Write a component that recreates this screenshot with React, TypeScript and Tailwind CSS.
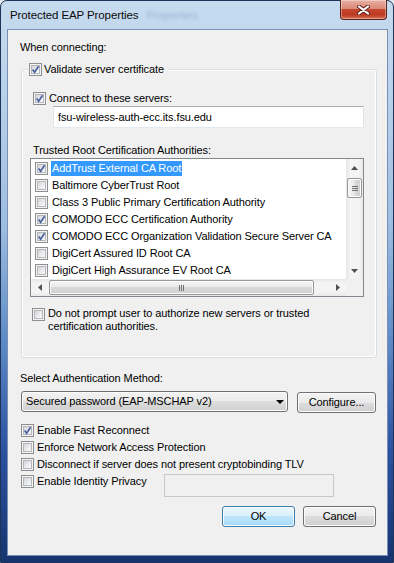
import React from "react";

const Check = ({ on }: { on?: boolean }) => (
  <span className="relative flex h-[13px] w-[13px] shrink-0 items-center justify-center border border-[#8e8f8f] bg-[#f4f4f4]">
    <span className="h-[9px] w-[9px] border border-[#b4b6ba] bg-[linear-gradient(135deg,#d3d5d9_0%,#e9ebee_55%,#fbfbfb_100%)]" />
    {on && (
      <svg viewBox="0 0 11 11" className="absolute left-0 top-0 h-[11px] w-[11px]">
        <path d="M2.6 5.6 L4.6 8.3 L8.6 2.2" fill="none" stroke="#4c62a0" strokeWidth="1.7" />
      </svg>
    )}
  </span>
);

const Tri = ({ dir }: { dir: "up" | "down" | "left" | "right" }) => {
  const d = {
    up: "M0 4 L3.5 0 L7 4 Z",
    down: "M0 0 L7 0 L3.5 4 Z",
    left: "M4 0 L4 7 L0 3.5 Z",
    right: "M0 0 L4 3.5 L0 7 Z",
  }[dir];
  const vert = dir === "up" || dir === "down";
  return (
    <svg viewBox={vert ? "0 0 7 4" : "0 0 4 7"} className={vert ? "h-[4px] w-[7px]" : "h-[7px] w-[4px]"}>
      <path d={d} fill="#505050" />
    </svg>
  );
};

const Btn = ({ children, def, className = "" }: { children: React.ReactNode; def?: boolean; className?: string }) => (
  <button
    className={`flex h-[21px] items-center justify-center rounded-[3px] border text-[11px] text-black shadow-[inset_0_0_0_1px_#fcfcfc] ${
      def
        ? "border-[#3c7fb1] bg-[linear-gradient(180deg,#eaf6fd_0%,#d9f0fc_50%,#bee6fd_50%,#a7d9f5_100%)]"
        : "border-[#707070] bg-[linear-gradient(180deg,#f2f2f2_0%,#ebebeb_50%,#dddddd_50%,#cfcfcf_100%)]"
    } ${className}`}
  >
    {children}
  </button>
);

const certs = [
  { name: "AddTrust External CA Root", on: true, sel: true },
  { name: "Baltimore CyberTrust Root" },
  { name: "Class 3 Public Primary Certification Authority" },
  { name: "COMODO ECC Certification Authority", on: true },
  { name: "COMODO ECC Organization Validation Secure Server CA", on: true },
  { name: "DigiCert Assured ID Root CA" },
  { name: "DigiCert High Assurance EV Root CA" },
];

const options = [
  { label: "Enable Fast Reconnect", on: true },
  { label: "Enforce Network Access Protection" },
  { label: "Disconnect if server does not present cryptobinding TLV" },
];

export default function App() {
  return (
    <div className="h-[563px] w-[394px] overflow-hidden bg-[#dfe8f1] font-['Liberation_Sans',Arial,sans-serif] text-[11px] tracking-[-0.1px] text-black">
      <div className="flex h-full w-full flex-col rounded-t-[7px] border border-[#1f3358] bg-[linear-gradient(180deg,#c6dbef_0%,#b7d0e9_18%,#9dbde0_40%,#5f8cc7_60%,#2c52a0_80%,#16346f_100%)]">
        {/* title bar */}
        <div className="flex h-[29px] shrink-0 items-start justify-between pl-[9px] pr-[6px]">
          <div className="mt-[7px] flex items-center leading-[15px]">
            <span className="text-[11.5px] text-[#0b0b0b]">Protected EAP Properties</span>
            <span className="ml-[8px] text-[11.5px] text-[#4d79a8] opacity-35 blur-[1.4px]">Properties</span>
          </div>
          <div className="-mt-[1px] flex h-[20px] w-[47px] items-center justify-center rounded-b-[4px] border border-t-0 border-[#5a2219] bg-[linear-gradient(180deg,#eab0a2_0%,#d98a79_45%,#c5472f_50%,#bd3a22_78%,#d8745a_100%)] shadow-[inset_0_0_0_1px_rgba(255,255,255,0.35)]">
            <svg viewBox="0 0 13 10" className="h-[10px] w-[13px]">
              <path d="M2 1.5 L11 8.5 M11 1.5 L2 8.5" stroke="#5b2018" strokeWidth="4" strokeLinecap="round" />
              <path d="M2 1.5 L11 8.5 M11 1.5 L2 8.5" stroke="#ffffff" strokeWidth="2.2" strokeLinecap="round" />
            </svg>
          </div>
        </div>

        {/* client area */}
        <div className="ml-[7px] flex h-[525px] w-[379px] flex-col bg-[#f0f0f0] pl-[12px] pt-[10px] shadow-[0_0_0_1px_#7890b4]">
          <div className="h-[15px] leading-[15px]">When connecting:</div>

          <fieldset className="ml-[1px] mt-[6px] w-[356px] rounded-[3px] border border-[#d5dfe5] pb-[24px] pl-[5px] shadow-[inset_0_0_0_1px_#ffffff]">
            <legend className="flex h-[16px] items-center gap-[2px] bg-[#f0f0f0] px-[2px]">
              <Check on />
              <span className="pr-[2px]">Validate server certificate</span>
            </legend>

            <div className="ml-[6px] mt-[13px] flex h-[16px] items-center gap-[3px]">
              <Check on />
              <span>Connect to these servers:</span>
            </div>
            <div className="ml-[26px] flex h-[22px] w-[311px] items-center border border-[#e2e3ea] border-t-[#abadb3] border-b-[#e3e9ef] bg-white pl-[4px]">
              fsu-wireless-auth-ecc.its.fsu.edu
            </div>

            <div className="ml-[6px] mt-[14px] h-[16px] leading-[16px]">Trusted Root Certification Authorities:</div>

            <div className="ml-[3px] flex h-[139px] w-[334px] flex-col border border-[#828790] bg-white">
              <div className="flex h-[120px]">
                <div className="flex-1 overflow-hidden pt-[1px]">
                  {certs.map((c) => (
                    <div key={c.name} className="flex h-[17px] items-center whitespace-nowrap pl-[4px]">
                      <Check on={c.on} />
                      <span
                        className={`ml-[3px] flex h-[15px] items-center px-[1px] ${
                          c.sel ? "bg-[#3399ff] text-white" : ""
                        }`}
                      >
                        {c.name}
                      </span>
                    </div>
                  ))}
                </div>
                {/* vertical scrollbar */}
                <div className="flex w-[17px] flex-col bg-[linear-gradient(90deg,#e6e6e6_0%,#f4f4f4_25%,#f4f4f4_75%,#e9e9e9_100%)]">
                  <div className="flex h-[17px] items-center justify-center">
                    <Tri dir="up" />
                  </div>
                  <div className="ml-[1px] mt-[2px] flex h-[20px] w-[15px] flex-col items-center justify-center gap-[1px] rounded-[2px] border border-[#979797] bg-[linear-gradient(90deg,#f6f6f6_0%,#e8e8e8_50%,#d9d9d9_50%,#d0d0d0_100%)] shadow-[inset_0_0_0_1px_#fbfbfb]">
                    <span className="h-[1px] w-[6px] bg-[#6f6f6f]" />
                    <span className="h-[1px] w-[6px] bg-[#6f6f6f]" />
                    <span className="h-[1px] w-[6px] bg-[#6f6f6f]" />
                  </div>
                  <div className="flex-1" />
                  <div className="flex h-[17px] items-center justify-center">
                    <Tri dir="down" />
                  </div>
                </div>
              </div>
              {/* horizontal scrollbar */}
              <div className="flex h-[17px]">
                <div className="flex flex-1 items-center bg-[linear-gradient(180deg,#e6e6e6_0%,#f4f4f4_25%,#f4f4f4_75%,#e9e9e9_100%)]">
                  <div className="flex h-full w-[17px] items-center justify-center">
                    <Tri dir="left" />
                  </div>
                  <div className="ml-[1px] flex h-[15px] w-[265px] items-center justify-center gap-[1px] rounded-[2px] border border-[#979797] bg-[linear-gradient(180deg,#f6f6f6_0%,#e8e8e8_50%,#d9d9d9_50%,#d0d0d0_100%)] shadow-[inset_0_0_0_1px_#fbfbfb]">
                    <span className="h-[6px] w-[1px] bg-[#6f6f6f]" />
                    <span className="h-[6px] w-[1px] bg-[#6f6f6f]" />
                    <span className="h-[6px] w-[1px] bg-[#6f6f6f]" />
                  </div>
                  <div className="flex-1" />
                  <div className="flex h-full w-[17px] items-center justify-center">
                    <Tri dir="right" />
                  </div>
                </div>
                <div className="w-[17px] bg-[#f0f0f0]" />
              </div>
            </div>

            <div className="ml-[5px] mt-[11px] flex items-start gap-[3px]">
              <Check />
              <span className="-mt-[1px] leading-[13px]">
                Do not prompt user to authorize new servers or trusted
                <br />
                certification authorities.
              </span>
            </div>
          </fieldset>

          <div className="mt-[12px] h-[16px] leading-[16px]">Select Authentication Method:</div>
          <div className="mt-[5px] flex items-start">
            <Btn className="ml-[1px] w-[267px] !justify-between pl-[4px] pr-[3px]">
              <span>Secured password (EAP-MSCHAP v2)</span>
              <svg viewBox="0 0 8 4" className="h-[4px] w-[8px]">
                <path d="M0 0 L8 0 L4 4 Z" fill="#000" />
              </svg>
            </Btn>
            <Btn className="ml-[9px] mt-[1px] w-[79px]">Configure...</Btn>
          </div>

          <div className="mt-[9px] flex flex-col">
            {options.map((o) => (
              <div key={o.label} className="ml-[1px] flex h-[17px] items-center gap-[3px]">
                <Check on={o.on} />
                <span>{o.label}</span>
              </div>
            ))}
            <div className="ml-[1px] flex items-start">
              <div className="flex h-[17px] w-[143px] items-center gap-[3px]">
                <Check />
                <span>Enable Identity Privacy</span>
              </div>
              <div className="mt-[1px] h-[23px] w-[170px] border border-[#c5c8cc] bg-[#f0f0f0]" />
            </div>
          </div>

          <div className="mt-[9px] flex justify-end gap-[8px] pr-[11px]">
            <Btn def className="w-[73px]">OK</Btn>
            <Btn className="w-[73px]">Cancel</Btn>
          </div>
        </div>
      </div>
    </div>
  );
}
